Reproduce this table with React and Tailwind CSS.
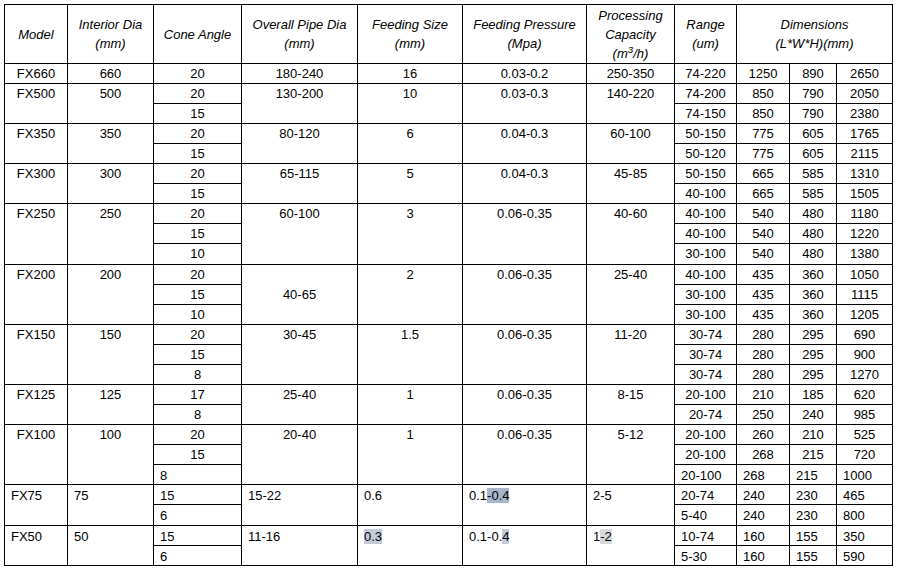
import React from "react";

const F = { fontFamily: '"Liberation Sans", Arial, sans-serif' };

function Td({ children, rs, cs, left, mid, className = "" }) {
  return (
    <td
      rowSpan={rs}
      colSpan={cs}
      className={`border border-black p-0 text-[13px] text-black ${
        mid ? "align-middle" : "align-top"
      } ${left ? "text-left pl-[6px] pt-[2px] leading-[17px]" : "text-center leading-[19px]"} ${className}`}
    >
      {children}
    </td>
  );
}

function Th({ children, cs }) {
  return (
    <th
      colSpan={cs}
      className="border border-black p-0 text-center align-middle text-[13px] font-normal italic leading-[19px] text-black"
    >
      {children}
    </th>
  );
}

export default function App() {
  return (
    <div className="min-h-[573px] w-[898px] bg-white pl-[4px] pt-[4px]" style={F}>
      <table className="table-fixed border-collapse" style={{ width: 888 }}>
        <colgroup>
          <col className="w-[63px]" />
          <col className="w-[86px]" />
          <col className="w-[88px]" />
          <col className="w-[116px]" />
          <col className="w-[105px]" />
          <col className="w-[124px]" />
          <col className="w-[88px]" />
          <col className="w-[62px]" />
          <col className="w-[53px]" />
          <col className="w-[47px]" />
          <col className="w-[56px]" />
        </colgroup>
        <thead>
          <tr className="h-[59px]">
            <Th>Model</Th>
            <Th>
              Interior Dia
              <br />
              (mm)
            </Th>
            <Th>Cone Angle</Th>
            <Th>
              Overall Pipe Dia
              <br />
              (mm)
            </Th>
            <Th>
              Feeding Size
              <br />
              (mm)
            </Th>
            <Th>
              Feeding Pressure
              <br />
              (Mpa)
            </Th>
            <Th>
              Processing
              <br />
              Capacity
              <br />
              (m<sup>3</sup>/h)
            </Th>
            <Th>
              Range
              <br />
              (um)
            </Th>
            <Th cs={3}>
              Dimensions
              <br />
              (L*W*H)(mm)
            </Th>
          </tr>
        </thead>
        <tbody>
          <tr className="h-[20px]">
            <Td>FX660</Td>
            <Td>660</Td>
            <Td>20</Td>
            <Td>180-240</Td>
            <Td>16</Td>
            <Td>0.03-0.2</Td>
            <Td>250-350</Td>
            <Td>74-220</Td>
            <Td>1250</Td>
            <Td>890</Td>
            <Td>2650</Td>
          </tr>

          <tr className="h-[20px]">
            <Td rs={2}>FX500</Td>
            <Td rs={2}>500</Td>
            <Td>20</Td>
            <Td rs={2}>130-200</Td>
            <Td rs={2}>10</Td>
            <Td rs={2}>0.03-0.3</Td>
            <Td rs={2}>140-220</Td>
            <Td>74-200</Td>
            <Td>850</Td>
            <Td>790</Td>
            <Td>2050</Td>
          </tr>
          <tr className="h-[20px]">
            <Td>15</Td>
            <Td>74-150</Td>
            <Td>850</Td>
            <Td>790</Td>
            <Td>2380</Td>
          </tr>

          <tr className="h-[20px]">
            <Td rs={2}>FX350</Td>
            <Td rs={2}>350</Td>
            <Td>20</Td>
            <Td rs={2}>80-120</Td>
            <Td rs={2}>6</Td>
            <Td rs={2}>0.04-0.3</Td>
            <Td rs={2}>60-100</Td>
            <Td>50-150</Td>
            <Td>775</Td>
            <Td>605</Td>
            <Td>1765</Td>
          </tr>
          <tr className="h-[20px]">
            <Td>15</Td>
            <Td>50-120</Td>
            <Td>775</Td>
            <Td>605</Td>
            <Td>2115</Td>
          </tr>

          <tr className="h-[20px]">
            <Td rs={2}>FX300</Td>
            <Td rs={2}>300</Td>
            <Td>20</Td>
            <Td rs={2}>65-115</Td>
            <Td rs={2}>5</Td>
            <Td rs={2}>0.04-0.3</Td>
            <Td rs={2}>45-85</Td>
            <Td>50-150</Td>
            <Td>665</Td>
            <Td>585</Td>
            <Td>1310</Td>
          </tr>
          <tr className="h-[20px]">
            <Td>15</Td>
            <Td>40-100</Td>
            <Td>665</Td>
            <Td>585</Td>
            <Td>1505</Td>
          </tr>

          <tr className="h-[20px]">
            <Td rs={3}>FX250</Td>
            <Td rs={3}>250</Td>
            <Td>20</Td>
            <Td rs={3}>60-100</Td>
            <Td rs={3}>3</Td>
            <Td rs={3}>0.06-0.35</Td>
            <Td rs={3}>40-60</Td>
            <Td>40-100</Td>
            <Td>540</Td>
            <Td>480</Td>
            <Td>1180</Td>
          </tr>
          <tr className="h-[20px]">
            <Td>15</Td>
            <Td>40-100</Td>
            <Td>540</Td>
            <Td>480</Td>
            <Td>1220</Td>
          </tr>
          <tr className="h-[21px]">
            <Td>10</Td>
            <Td>30-100</Td>
            <Td>540</Td>
            <Td>480</Td>
            <Td>1380</Td>
          </tr>

          <tr className="h-[20px]">
            <Td rs={3}>FX200</Td>
            <Td rs={3}>200</Td>
            <Td>20</Td>
            <Td rs={3} mid>
              40-65
            </Td>
            <Td rs={3}>2</Td>
            <Td rs={3}>0.06-0.35</Td>
            <Td rs={3}>25-40</Td>
            <Td>40-100</Td>
            <Td>435</Td>
            <Td>360</Td>
            <Td>1050</Td>
          </tr>
          <tr className="h-[20px]">
            <Td>15</Td>
            <Td>30-100</Td>
            <Td>435</Td>
            <Td>360</Td>
            <Td>1115</Td>
          </tr>
          <tr className="h-[20px]">
            <Td>10</Td>
            <Td>30-100</Td>
            <Td>435</Td>
            <Td>360</Td>
            <Td>1205</Td>
          </tr>

          <tr className="h-[20px]">
            <Td rs={3}>FX150</Td>
            <Td rs={3}>150</Td>
            <Td>20</Td>
            <Td rs={3}>30-45</Td>
            <Td rs={3}>1.5</Td>
            <Td rs={3}>0.06-0.35</Td>
            <Td rs={3}>11-20</Td>
            <Td>30-74</Td>
            <Td>280</Td>
            <Td>295</Td>
            <Td>690</Td>
          </tr>
          <tr className="h-[20px]">
            <Td>15</Td>
            <Td>30-74</Td>
            <Td>280</Td>
            <Td>295</Td>
            <Td>900</Td>
          </tr>
          <tr className="h-[20px]">
            <Td>8</Td>
            <Td>30-74</Td>
            <Td>280</Td>
            <Td>295</Td>
            <Td>1270</Td>
          </tr>

          <tr className="h-[20px]">
            <Td rs={2}>FX125</Td>
            <Td rs={2}>125</Td>
            <Td>17</Td>
            <Td rs={2}>25-40</Td>
            <Td rs={2}>1</Td>
            <Td rs={2}>0.06-0.35</Td>
            <Td rs={2}>8-15</Td>
            <Td>20-100</Td>
            <Td>210</Td>
            <Td>185</Td>
            <Td>620</Td>
          </tr>
          <tr className="h-[20px]">
            <Td>8</Td>
            <Td>20-74</Td>
            <Td>250</Td>
            <Td>240</Td>
            <Td>985</Td>
          </tr>

          <tr className="h-[20px]">
            <Td rs={3}>FX100</Td>
            <Td rs={3}>100</Td>
            <Td>20</Td>
            <Td rs={3}>20-40</Td>
            <Td rs={3}>1</Td>
            <Td rs={3}>0.06-0.35</Td>
            <Td rs={3}>5-12</Td>
            <Td>20-100</Td>
            <Td>260</Td>
            <Td>210</Td>
            <Td>525</Td>
          </tr>
          <tr className="h-[20px]">
            <Td>15</Td>
            <Td>20-100</Td>
            <Td>268</Td>
            <Td>215</Td>
            <Td>720</Td>
          </tr>
          <tr className="h-[20px]">
            <Td left>8</Td>
            <Td left>20-100</Td>
            <Td left>268</Td>
            <Td left>215</Td>
            <Td left>1000</Td>
          </tr>

          <tr className="h-[20px]">
            <Td rs={2} left>
              FX75
            </Td>
            <Td rs={2} left>
              75
            </Td>
            <Td left>15</Td>
            <Td rs={2} left>
              15-22
            </Td>
            <Td rs={2} left>
              0.6
            </Td>
            <Td rs={2} left>
              0.1<span className="bg-[#a9b5ca]">-0.4</span>
            </Td>
            <Td rs={2} left>
              2-5
            </Td>
            <Td left>20-74</Td>
            <Td left>240</Td>
            <Td left>230</Td>
            <Td left>465</Td>
          </tr>
          <tr className="h-[21px]">
            <Td left>6</Td>
            <Td left>5-40</Td>
            <Td left>240</Td>
            <Td left>230</Td>
            <Td left>800</Td>
          </tr>

          <tr className="h-[20px]">
            <Td rs={2} left>
              FX50
            </Td>
            <Td rs={2} left>
              50
            </Td>
            <Td left>15</Td>
            <Td rs={2} left>
              11-16
            </Td>
            <Td rs={2} left>
              <span className="bg-[#c3cbd9]">0.3</span>
            </Td>
            <Td rs={2} left>
              0.1-0.<span className="bg-[#c3cbd9]">4</span>
            </Td>
            <Td rs={2} left>
              1<span className="bg-[#d6d9de]">-2</span>
            </Td>
            <Td left>10-74</Td>
            <Td left>160</Td>
            <Td left>155</Td>
            <Td left>350</Td>
          </tr>
          <tr className="h-[20px]">
            <Td left>6</Td>
            <Td left>5-30</Td>
            <Td left>160</Td>
            <Td left>155</Td>
            <Td left>590</Td>
          </tr>
        </tbody>
      </table>
    </div>
  );
}
